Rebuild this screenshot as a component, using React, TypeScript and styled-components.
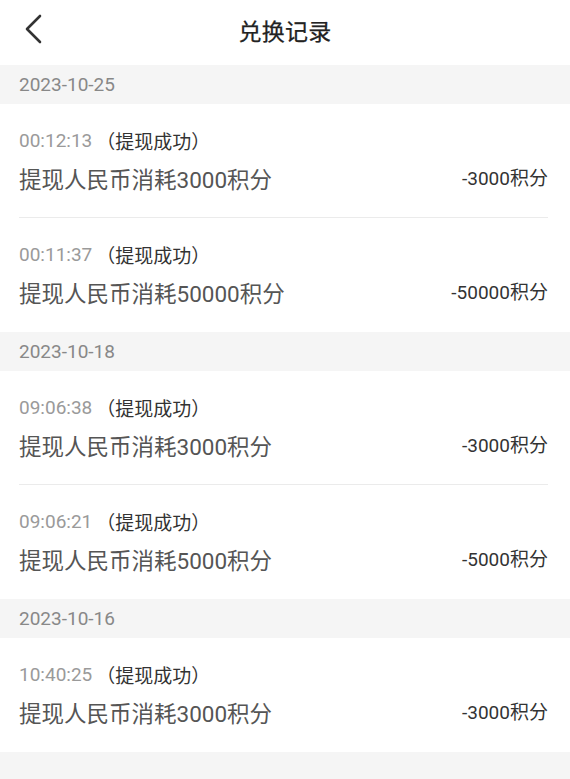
import styled, { createGlobalStyle } from "styled-components";

const GlobalStyle = createGlobalStyle`
  html, body {
    margin: 0;
    padding: 0;
    background: #f5f5f5;
  }
  body {
    font-family: Roboto, "Noto Sans CJK SC", sans-serif;
  }
`;

const Page = styled.div`
  width: 570px;
  min-height: 779px;
  background: #f5f5f5;
`;

const Header = styled.header`
  position: relative;
  height: 65px;
  box-sizing: border-box;
  padding-bottom: 6px;
  background: #fff;
  display: flex;
  align-items: center;
  justify-content: center;
`;

const BackButton = styled.button`
  position: absolute;
  left: 18px;
  top: 12px;
  width: 32px;
  height: 34px;
  padding: 0;
  border: 0;
  background: none;
  display: flex;
  align-items: center;
  justify-content: center;
`;

const Title = styled.h1`
  margin: 0;
  font-size: 23px;
  font-weight: 400;
  -webkit-text-stroke: 0.25px #222;
  color: #222;
  letter-spacing: 0.3px;
  font-family: "Noto Sans CJK SC", sans-serif;
`;

const DateBar = styled.div`
  height: 39px;
  padding: 0 19px;
  display: flex;
  align-items: center;
  font-size: 19px;
  color: #888;
`;

const Group = styled.section`
  background: #fff;
  padding: 0 22px 0 19px;
`;

const Item = styled.div<{ $last?: boolean }>`
  height: 114px;
  box-sizing: border-box;
  padding-top: 24px;
  border-bottom: ${(p) => (p.$last ? "none" : "1px solid #ebebeb")};
`;

const TimeLine = styled.div`
  height: 26px;
  line-height: 26px;
  font-size: 19px;
  display: flex;
  align-items: center;
`;

const Time = styled.span`
  color: #9a9a9a;
`;

const Status = styled.span`
  margin-left: 4px;
  color: #333;
  font-family: "Noto Sans CJK SC", sans-serif;
`;

const MainRow = styled.div`
  margin-top: 10px;
  height: 28px;
  display: flex;
  align-items: center;
  justify-content: space-between;
`;

const Desc = styled.span`
  font-size: 22.5px;
  color: #555;
`;

const Amount = styled.span`
  font-size: 19px;
  color: #333;
  margin-top: -4px;
`;

type Rec = { time: string; amount: number };

const data: { date: string; items: Rec[] }[] = [
  {
    date: "2023-10-25",
    items: [
      { time: "00:12:13", amount: 3000 },
      { time: "00:11:37", amount: 50000 },
    ],
  },
  {
    date: "2023-10-18",
    items: [
      { time: "09:06:38", amount: 3000 },
      { time: "09:06:21", amount: 5000 },
    ],
  },
  {
    date: "2023-10-16",
    items: [{ time: "10:40:25", amount: 3000 }],
  },
];

export default function App() {
  return (
    <Page>
      <GlobalStyle />
      <Header>
        <BackButton aria-label="back">
          <svg width="20" height="30" viewBox="0 0 20 30">
            <path
              d="M16 2 L3 15 L16 28"
              fill="none"
              stroke="#333"
              strokeWidth="2.6"
              strokeLinecap="round"
              strokeLinejoin="round"
            />
          </svg>
        </BackButton>
        <Title>兑换记录</Title>
      </Header>
      {data.map((g) => (
        <div key={g.date}>
          <DateBar>{g.date}</DateBar>
          <Group>
            {g.items.map((it, i) => (
              <Item key={it.time} $last={i === g.items.length - 1}>
                <TimeLine>
                  <Time>{it.time}</Time>
                  <Status>（提现成功）</Status>
                </TimeLine>
                <MainRow>
                  <Desc>提现人民币消耗{it.amount}积分</Desc>
                  <Amount>-{it.amount}积分</Amount>
                </MainRow>
              </Item>
            ))}
          </Group>
        </div>
      ))}
    </Page>
  );
}
